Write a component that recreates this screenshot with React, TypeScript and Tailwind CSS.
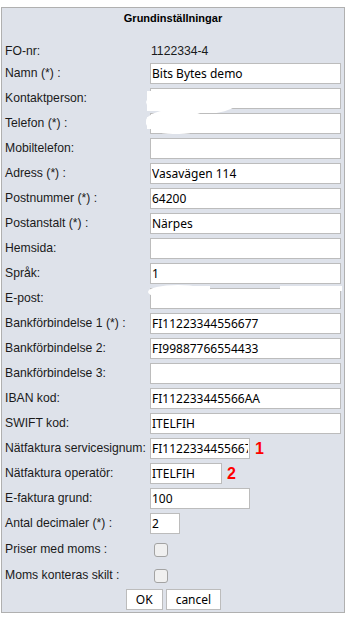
import React from "react";

type Row = {
  label: string;
  value?: string;
  width?: string;
  blob?: "k" | "t" | "e";
  marker?: string;
  checkbox?: boolean;
};

const rows: Row[] = [
  { label: "Namn (*) :", value: "Bits Bytes demo" },
  { label: "Kontaktperson:", value: "", blob: "k" },
  { label: "Telefon (*) :", value: "", blob: "t" },
  { label: "Mobiltelefon:", value: "" },
  { label: "Adress (*) :", value: "Vasavägen 114" },
  { label: "Postnummer (*) :", value: "64200" },
  { label: "Postanstalt (*) :", value: "Närpes" },
  { label: "Hemsida:", value: "" },
  { label: "Språk:", value: "1" },
  { label: "E-post:", value: "", blob: "e" },
  { label: "Bankförbindelse 1 (*) :", value: "FI11223344556677" },
  { label: "Bankförbindelse 2:", value: "FI99887766554433" },
  { label: "Bankförbindelse 3:", value: "" },
  { label: "IBAN kod:", value: "FI112233445566AA" },
  { label: "SWIFT kod:", value: "ITELFIH" },
  { label: "Nätfaktura servicesignum:", value: "FI11223344556677", width: "w-[100px]", marker: "1" },
  { label: "Nätfaktura operatör:", value: "ITELFIH", width: "w-[72px]", marker: "2" },
  { label: "E-faktura grund:", value: "100", width: "w-[100px]" },
  { label: "Antal decimaler (*) :", value: "2", width: "w-[30px]" },
];

const labelFont = { fontFamily: '"Liberation Sans", Arial, sans-serif' } as const;
const inputFont = { fontFamily: '"Noto Sans", "Open Sans", sans-serif' } as const;

function Blob({ kind }: { kind: "k" | "t" | "e" }) {
  if (kind === "k")
    return (
      <>
        <div className="absolute left-[-4px] top-[1px] h-[26px] w-[92px] rounded-[50%] bg-white" />
        <div className="absolute left-[-3px] top-[3px] h-[20px] w-[30px] bg-white" />
      </>
    );
  if (kind === "t")
    return (
      <>
        <div className="absolute left-[-4px] top-[-3px] h-[24px] w-[60px] rounded-[45%] bg-white" />
        <div className="absolute left-[-3px] top-[4px] h-[12px] w-[20px] bg-white" />
      </>
    );
  return (
    <>
      <div className="absolute left-[-2px] top-[-3px] h-[14px] w-[60px] rounded-[50%] bg-white" />
      <div className="absolute left-[40px] top-[-2px] h-[5px] w-[20px] bg-white" />
      <div className="absolute left-[130px] top-[-2px] h-[5px] w-[62px] bg-white" />
    </>
  );
}

function Checkbox() {
  return (
    <div className="ml-[4px] mt-[1px] h-[14px] w-[14px] rounded-[3px] border border-[#a3a3a3] bg-[#f0f0f0]" />
  );
}

export default function App() {
  return (
    <div className="min-h-[629px] bg-white pt-[7px]">
      <div className="ml-[1px] w-[344px] border border-[#b0b0b0] bg-[#dee2ea] text-[#1a1a1a]">
        <div
          className="flex h-[21px] items-center justify-center text-[11px] font-bold text-black"
          style={labelFont}
        >
          Grundinställningar
        </div>
        <div className="h-[13px]" />
        <div className="flex h-[19px] items-center" style={labelFont}>
          <div className="w-[148px] pl-[3px] text-[12.2px]">FO-nr:</div>
          <div className="pl-[1px] text-[12.2px]">1122334-4</div>
        </div>
        {rows.map((r) => (
          <div key={r.label} className="flex h-[25px] items-center">
            <div className="w-[148px] shrink-0 whitespace-nowrap pl-[3px] text-[12.2px]" style={labelFont}>
              {r.label}
            </div>
            <div className="relative flex items-center">
              <input
                readOnly
                defaultValue={r.value}
                className={`${r.width ?? "w-[191px]"} h-[21px] border border-[#bcbcbc] bg-white px-[1px] text-[12px] text-black outline-none`}
                style={inputFont}
              />
              {r.blob && <Blob kind={r.blob} />}
              {r.marker && (
                <span
                  className="ml-[5px] text-[16px] font-bold leading-none text-[#ff0000]"
                  style={labelFont}
                >
                  {r.marker}
                </span>
              )}
            </div>
          </div>
        ))}
        <div className="flex h-[26px] items-center">
          <div className="w-[148px] pl-[3px] text-[12.2px]" style={labelFont}>
            Priser med moms :
          </div>
          <Checkbox />
        </div>
        <div className="flex h-[26px] items-center">
          <div className="w-[148px] pl-[3px] text-[12.2px]" style={labelFont}>
            Moms konteras skilt :
          </div>
          <Checkbox />
        </div>
        <div className="flex h-[24px] items-start justify-center gap-[3px] pl-[1px] pt-[1px]">
          <button
            className="h-[21px] border border-[#bcbcbc] bg-white px-[9px] text-[12px] leading-none text-black"
            style={inputFont}
          >
            OK
          </button>
          <button
            className="h-[21px] border border-[#bcbcbc] bg-white px-[9px] text-[12px] leading-none text-black"
            style={inputFont}
          >
            cancel
          </button>
        </div>
      </div>
    </div>
  );
}
